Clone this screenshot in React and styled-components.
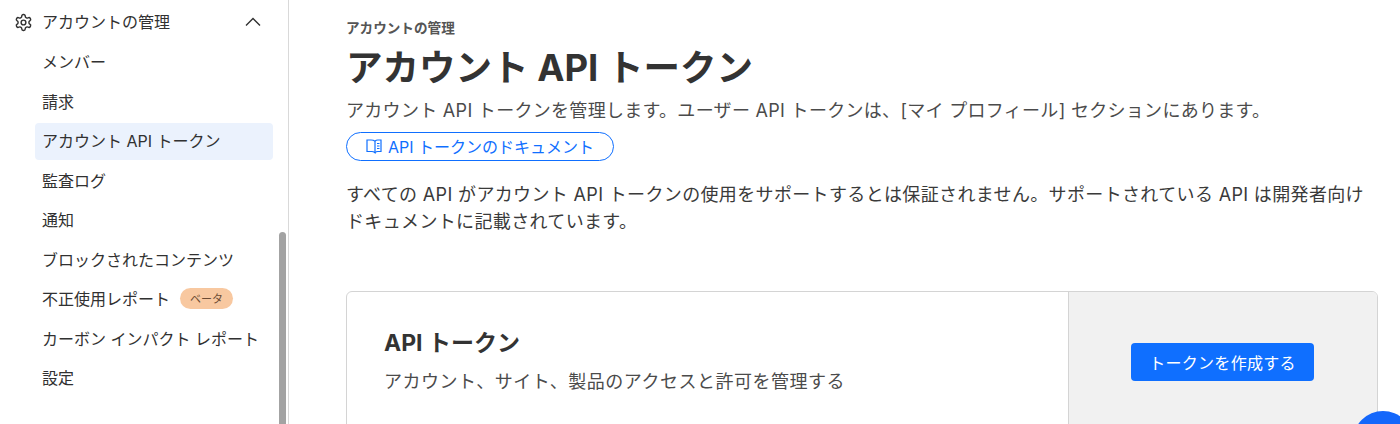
import React from 'react';
import styled, { createGlobalStyle } from 'styled-components';

const GlobalStyle = createGlobalStyle`
    html, body {
        margin: 0;
        padding: 0;
        height: 100%;
        background: #fff;
        overflow: hidden;
    }

    body {
        font-family: Inter, "Noto Sans CJK JP", sans-serif;
        color: #313131;
    }
`

const Page = styled.div`
    position: relative;
    display: flex;
    width: 1400px;
    height: 424px;
    overflow: hidden;
`

const Sidebar = styled.nav`
    position: relative;
    flex: none;
    width: 288px;
    height: 424px;
    padding-top: 2px;
    border-right: 1px solid #d9d9d9;
`

const SectionHead = styled.div`
    display: flex;
    align-items: center;
    box-sizing: border-box;
    height: 40px;
    padding-left: 14px;
    font-size: 16px;

    span {
        margin-left: 9px;
        padding-bottom: 2px;
        flex: 1;
    }

    svg {
        flex: none;
    }
`

const Chevron = styled.svg`
    margin-right: 27px;
`

const NavList = styled.div`
    display: flex;
    flex-direction: column;
    width: 238px;
    margin-top: 2px;
    padding-left: 35px;
    gap: 3px;
`

const NavItem = styled.div`
    display: flex;
    align-items: center;
    box-sizing: border-box;
    height: 36.5px;
    padding: 0 0 2px 7px;
    border-radius: 4px;
    font-size: 16px;
    white-space: nowrap;
    background: ${props => props.$active ? '#ebf2fd' : 'transparent'};
`

const Badge = styled.span`
    display: inline-flex;
    align-items: center;
    justify-content: center;
    width: 53px;
    height: 21px;
    margin-left: 10px;
    border-radius: 11px;
    background: #f8c8a0;
    color: #6b4a33;
    font-size: 11px;
`

const ScrollThumb = styled.div`
    position: absolute;
    left: 279px;
    top: 232px;
    width: 7px;
    height: 210px;
    border-radius: 4px;
    background: #a3a3a3;
`

const Main = styled.main`
    flex: 1;
    padding: 20px 22px 0 57px;
    min-width: 0;
`

const Eyebrow = styled.div`
    font-size: 13.6px;
    line-height: 17px;
    font-weight: 700;
    color: #555;
`

const Title = styled.h1`
    margin: 9px 0 0;
    font-size: 36.5px;
    line-height: 44px;
    font-weight: 700;
    color: #333;
`

const Lead = styled.p`
    margin: 9px 0 0;
    font-size: 18px;
    letter-spacing: .3px;
    line-height: 24px;
    color: #4b4b4b;
    white-space: nowrap;
`

const DocLink = styled.a`
    display: flex;
    align-items: center;
    box-sizing: border-box;
    width: 268px;
    height: 29px;
    margin-top: 9px;
    padding: 0 0 1px 19px;
    border: 1px solid #0f6fff;
    border-radius: 15px;
    color: #0f6fff;
    font-size: 16px;
    white-space: nowrap;

    span {
        margin-left: 6px;
    }
`

const Note = styled.p`
    margin: 20px 0 0;
    font-size: 18px;
    letter-spacing: .35px;
    line-height: 27px;
    color: #3a3a3a;
`

const Card = styled.section`
    display: flex;
    box-sizing: border-box;
    height: 200px;
    margin-top: 56px;
    border: 1px solid #d4d4d4;
    border-radius: 6px;
    overflow: hidden;
`

const CardBody = styled.div`
    flex: 1;
    padding: 35px 0 0 37px;
`

const CardTitle = styled.h2`
    margin: 0;
    font-size: 23px;
    line-height: 32px;
    font-weight: 700;
    color: #333;
`

const CardText = styled.p`
    margin: 10px 0 0;
    font-size: 18px;
    letter-spacing: .5px;
    line-height: 26px;
    color: #4b4b4b;
`

const CardAside = styled.div`
    flex: none;
    width: 309px;
    box-sizing: border-box;
    border-left: 1px solid #d4d4d4;
    background: #f1f1f1;
    padding: 51px 0 0 62px;
`

const CreateButton = styled.button`
    display: block;
    width: 183px;
    height: 38px;
    padding: 0;
    border: none;
    border-radius: 4px;
    background: #0f6fff;
    color: #fff;
    font-family: inherit;
    font-size: 16px;
    letter-spacing: .3px;
`

const ChatBubble = styled.div`
    position: absolute;
    left: 1353px;
    top: 411px;
    width: 60px;
    height: 60px;
    border-radius: 50%;
    background: #1467fb;
`

const GearIcon = () => (
    <svg width="19" height="19" viewBox="0 0 24 24" fill="none" stroke="#313131" strokeWidth="1.8" strokeLinecap="round" strokeLinejoin="round">
        <path d="M12.22 2h-.44a2 2 0 0 0-2 2v.18a2 2 0 0 1-1 1.73l-.43.25a2 2 0 0 1-2 0l-.15-.08a2 2 0 0 0-2.73.73l-.22.38a2 2 0 0 0 .73 2.73l.15.1a2 2 0 0 1 1 1.72v.51a2 2 0 0 1-1 1.74l-.15.09a2 2 0 0 0-.73 2.73l.22.38a2 2 0 0 0 2.73.73l.15-.08a2 2 0 0 1 2 0l.43.25a2 2 0 0 1 1 1.73V20a2 2 0 0 0 2 2h.44a2 2 0 0 0 2-2v-.18a2 2 0 0 1 1-1.73l.43-.25a2 2 0 0 1 2 0l.15.08a2 2 0 0 0 2.73-.73l.22-.39a2 2 0 0 0-.73-2.73l-.15-.08a2 2 0 0 1-1-1.74v-.5a2 2 0 0 1 1-1.74l.15-.09a2 2 0 0 0 .73-2.73l-.22-.38a2 2 0 0 0-2.73-.73l-.15.08a2 2 0 0 1-2 0l-.43-.25a2 2 0 0 1-1-1.73V4a2 2 0 0 0-2-2z" />
        <circle cx="12" cy="12" r="3" />
    </svg>
)

const BookIcon = () => (
    <svg width="16" height="15" viewBox="0 0 16 15" fill="none" stroke="#0f6fff" strokeWidth="1.2">
        <path d="M9 2.2C8 1.4 6.5 1 5 1H1v11.5h4.5c1.4 0 2.6.4 3.5 1.2z" />
        <path d="M9 2.2c.7-.7 1.6-1.2 2.8-1.2H15v11.5h-3.2c-1.2 0-2.1.4-2.8 1.2" />
        <path d="M11 4.5h2.5M11 7h2.5M11 9.5h2.5" />
    </svg>
)

const navItems = ['メンバー', '請求', 'アカウント API トークン', '監査ログ', '通知', 'ブロックされたコンテンツ', '不正使用レポート', 'カーボン インパクト レポート', '設定'];

const App = () => (
    <Page>
        <GlobalStyle />
        <Sidebar>
            <SectionHead>
                <GearIcon />
                <span>アカウントの管理</span>
                <Chevron width="16" height="10" viewBox="0 0 16 10" fill="none" stroke="#313131" strokeWidth="1.4">
                    <path d="M1 8.5L8 1.5l7 7" />
                </Chevron>
            </SectionHead>
            <NavList>
                {navItems.map(item => (
                    <NavItem key={item} $active={item === 'アカウント API トークン'}>
                        {item}
                        {item === '不正使用レポート' && <Badge>ベータ</Badge>}
                    </NavItem>
                ))}
            </NavList>
            <ScrollThumb />
        </Sidebar>
        <Main>
            <Eyebrow>アカウントの管理</Eyebrow>
            <Title>アカウント API トークン</Title>
            <Lead>アカウント API トークンを管理します。ユーザー API トークンは、[マイ プロフィール] セクションにあります。</Lead>
            <DocLink>
                <BookIcon />
                <span>API トークンのドキュメント</span>
            </DocLink>
            <Note>すべての API がアカウント API トークンの使用をサポートするとは保証されません。サポートされている API は開発者向けドキュメントに記載されています。</Note>
            <Card>
                <CardBody>
                    <CardTitle>API トークン</CardTitle>
                    <CardText>アカウント、サイト、製品のアクセスと許可を管理する</CardText>
                </CardBody>
                <CardAside>
                    <CreateButton>トークンを作成する</CreateButton>
                </CardAside>
            </Card>
        </Main>
        <ChatBubble />
    </Page>
)

export default App;
